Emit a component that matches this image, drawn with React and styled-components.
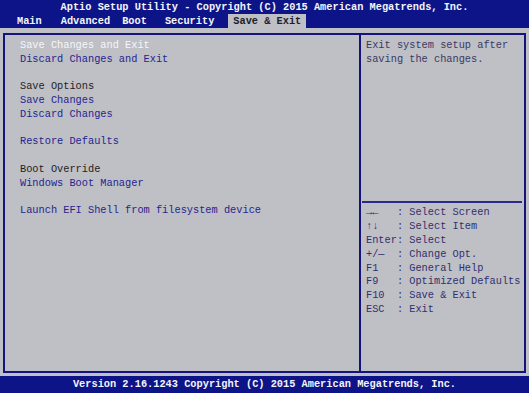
import React from "react"
import styled, { createGlobalStyle } from "styled-components"

const BLUE = "#0d1488"
const GRAY = "#bfbfc6"
const LINK = "#25258f"

const GlobalStyle = createGlobalStyle`
  html, body {
    margin: 0;
    padding: 0;
    background: ${GRAY};
  }
  body {
    font-family: "Liberation Mono", "DejaVu Sans Mono", monospace;
    font-size: 10.3px;
  }
`

const Screen = styled.div`
  width: 529px;
  height: 393px;
  display: flex;
  flex-direction: column;
  background: ${GRAY};
  overflow: hidden;
`

const TopBar = styled.header`
  background: ${BLUE};
  height: 28px;
  display: flex;
  flex-direction: column;
  color: #f4f4f8;
  font-weight: bold;
`

const Title = styled.div`
  height: 14px;
  line-height: 14px;
  text-align: center;
  padding-left: 0;
`

const Tabs = styled.nav`
  display: flex;
  height: 14px;
  line-height: 14px;
  padding-left: 12px;
`

const Tab = styled.span`
  padding: 0 5px;
  margin-left: ${p => p.$gap || 0}px;
  background: ${p => (p.$active ? GRAY : "transparent")};
  color: ${p => (p.$active ? "#1d1d2a" : "#f4f4f8")};
  white-space: pre;
`

const Body = styled.main`
  flex: 1;
  padding: 5px 3px 3px 3px;
  display: flex;
`

const Frame = styled.div`
  flex: 1;
  border: 2px solid #14147c;
  display: grid;
  grid-template-columns: 1fr 165px;
`

const Menu = styled.section`
  padding: 4px 0 0 15px;
  line-height: 13.75px;
`

const Row = styled.div`
  height: 13.75px;
  white-space: pre;
  color: ${p =>
    p.$kind === "selected" ? "#f6f6fa" : p.$kind === "label" ? "#1e1e24" : LINK};
`

const Side = styled.aside`
  border-left: 2px solid #14147c;
  display: flex;
  flex-direction: column;
`

const Help = styled.div`
  height: 162px;
  padding: 4px 0 0 5px;
  line-height: 13.75px;
  color: #3a3a62;
`

const Keys = styled.div`
  border-top: 2px solid #2a2a8c;
  margin: 0 2px 0 1px;
  padding: 3px 0 0 4px;
  color: #30306e;
`

const KeyLine = styled.div`
  height: 13.9px;
  line-height: 13.9px;
  white-space: pre;
`

const BottomBar = styled.footer`
  background: ${BLUE};
  height: 17px;
  line-height: 16px;
  text-align: center;
  color: #f4f4f8;
  font-weight: bold;
`

const menu = [
  { text: "Save Changes and Exit", kind: "selected" },
  { text: "Discard Changes and Exit" },
  { text: "" },
  { text: "Save Options", kind: "label" },
  { text: "Save Changes" },
  { text: "Discard Changes" },
  { text: "" },
  { text: "Restore Defaults" },
  { text: "" },
  { text: "Boot Override", kind: "label" },
  { text: "Windows Boot Manager" },
  { text: "" },
  { text: "Launch EFI Shell from filesystem device" },
]

const keys = [
  "→←   : Select Screen",
  "↑↓   : Select Item",
  "Enter: Select",
  "+/—  : Change Opt.",
  "F1   : General Help",
  "F9   : Optimized Defaults",
  "F10  : Save & Exit",
  "ESC  : Exit",
]

const App = () => (
  <>
    <GlobalStyle />
    <Screen>
      <TopBar>
        <Title>Aptio Setup Utility - Copyright (C) 2015 American Megatrends, Inc.</Title>
        <Tabs>
          <Tab>Main</Tab>
          <Tab $gap={9}>Advanced</Tab>
          <Tab $gap={2}>Boot</Tab>
          <Tab $gap={8}>Security</Tab>
          <Tab $gap={9} $active>Save &amp; Exit</Tab>
        </Tabs>
      </TopBar>
      <Body>
        <Frame>
          <Menu>
            {menu.map((m, i) => (
              <Row key={i} $kind={m.kind}>{m.text}</Row>
            ))}
          </Menu>
          <Side>
            <Help>
              Exit system setup after
              <br />
              saving the changes.
            </Help>
            <Keys>
              {keys.map(k => (
                <KeyLine key={k}>{k}</KeyLine>
              ))}
            </Keys>
          </Side>
        </Frame>
      </Body>
      <BottomBar>Version 2.16.1243 Copyright (C) 2015 American Megatrends, Inc.</BottomBar>
    </Screen>
  </>
)

export default App
